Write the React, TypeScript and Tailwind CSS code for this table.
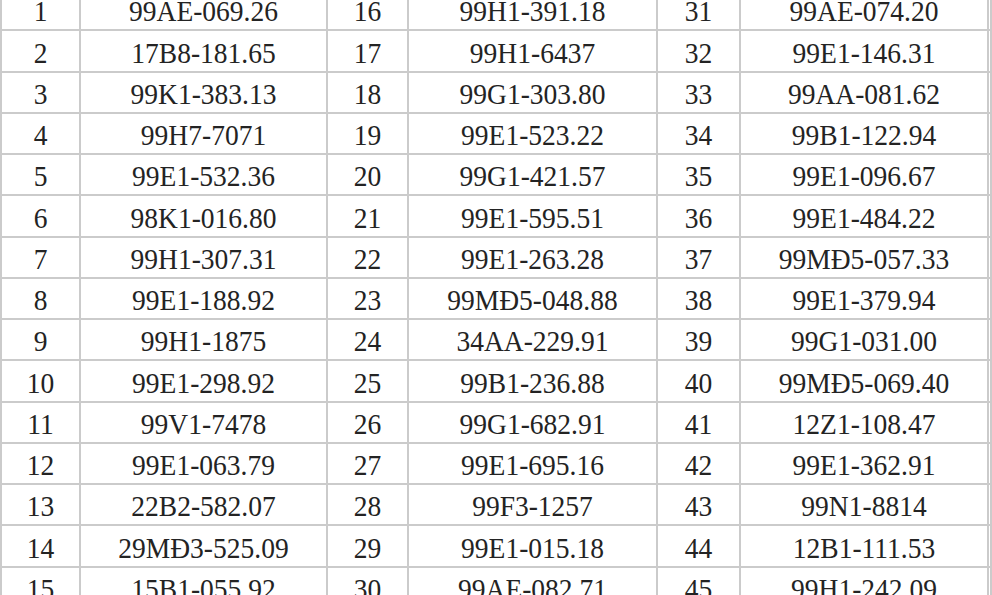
import React from "react";

const plates: string[] = [
  "99AE-069.26", "17B8-181.65", "99K1-383.13", "99H7-7071", "99E1-532.36",
  "98K1-016.80", "99H1-307.31", "99E1-188.92", "99H1-1875", "99E1-298.92",
  "99V1-7478", "99E1-063.79", "22B2-582.07", "29MĐ3-525.09", "15B1-055.92",
  "99H1-391.18", "99H1-6437", "99G1-303.80", "99E1-523.22", "99G1-421.57",
  "99E1-595.51", "99E1-263.28", "99MĐ5-048.88", "34AA-229.91", "99B1-236.88",
  "99G1-682.91", "99E1-695.16", "99F3-1257", "99E1-015.18", "99AE-082.71",
  "99AE-074.20", "99E1-146.31", "99AA-081.62", "99B1-122.94", "99E1-096.67",
  "99E1-484.22", "99MĐ5-057.33", "99E1-379.94", "99G1-031.00", "99MĐ5-069.40",
  "12Z1-108.47", "99E1-362.91", "99N1-8814", "12B1-111.53", "99H1-242.09",
];

const Cell = ({ children, first }: { children?: React.ReactNode; first?: boolean }) => (
  <div
    className={
      "flex h-[41.25px] items-center justify-center border-b-2 border-r-2 border-[#cbcbcb] pt-[3px] " +
      (first ? "border-l-2" : "")
    }
  >
    <span className="inline-block scale-y-[1.1]">{children}</span>
  </div>
);

const App = () => {
  const rows = Array.from({ length: 15 }, (_, i) => i);

  return (
    <div className="h-[595px] w-[992px] overflow-hidden bg-white">
      <div
        className="mt-[-10px] grid grid-cols-[81px_247px_81px_249px_83px_248px_1fr] text-[27.5px] leading-none text-[#232323]"
        style={{ fontFamily: '"Liberation Serif", "Times New Roman", serif' }}
      >
        {rows.map((i) => (
          <React.Fragment key={i}>
            <Cell first>{i + 1}</Cell>
            <Cell>{plates[i]}</Cell>
            <Cell>{i + 16}</Cell>
            <Cell>{plates[i + 15]}</Cell>
            <Cell>{i + 31}</Cell>
            <Cell>{plates[i + 30]}</Cell>
            <Cell />
          </React.Fragment>
        ))}
      </div>
    </div>
  );
};

export default App;
